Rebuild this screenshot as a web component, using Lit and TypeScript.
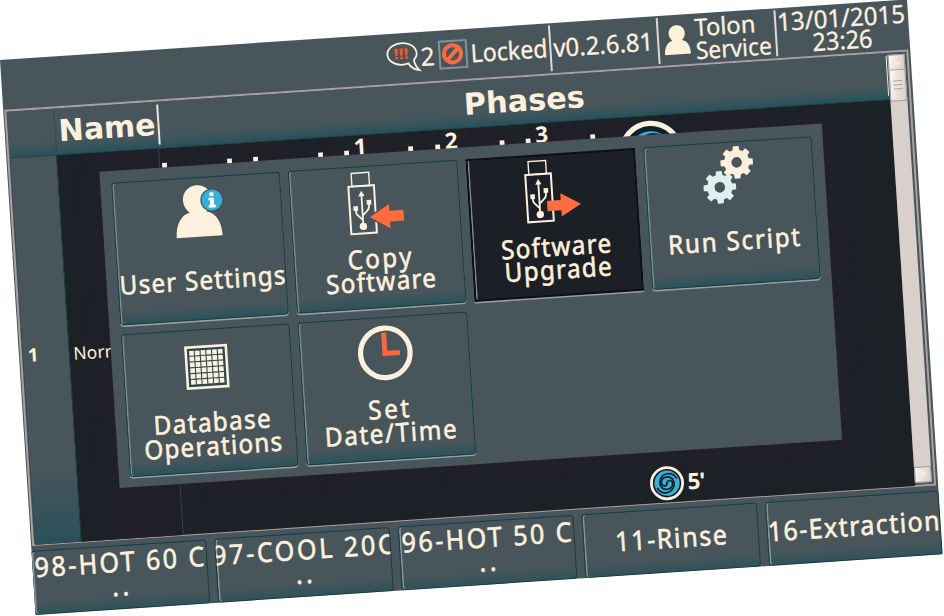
import { LitElement, html, svg, css } from "lit";
import { customElement } from "lit/decorators.js";
import { classMap } from "lit/directives/class-map.js";

interface Line { text: string; w: number; }
interface Action { id: string; lines: Line[]; top: number; selected?: boolean; }
interface Program { lines: Line[]; }

const ACTIONS: Action[] = [
  { id: "user", lines: [{ text: "User Settings", w: 166 }], top: 93.5 },
  { id: "copy", lines: [{ text: "Copy", w: 64 }, { text: "Software", w: 110 }], top: 83 },
  { id: "upgrade", lines: [{ text: "Software", w: 110 }, { text: "Upgrade", w: 107 }], top: 82, selected: true },
  { id: "script", lines: [{ text: "Run Script", w: 132 }], top: 89.5 },
  { id: "database", lines: [{ text: "Database", w: 117 }, { text: "Operations", w: 138 }], top: 83.5 },
  { id: "clock", lines: [{ text: "Set", w: 41 }, { text: "Date/Time", w: 132 }], top: 82.5 },
];

const PROGRAMS: Program[] = [
  { lines: [{ text: "98-HOT 60 C", w: 170 }, { text: "..", w: 17 }] },
  { lines: [{ text: "97-COOL 20C", w: 182 }, { text: "..", w: 17 }] },
  { lines: [{ text: "96-HOT 50 C", w: 170 }, { text: "..", w: 17 }] },
  { lines: [{ text: "11-Rinse", w: 112 }] },
  { lines: [{ text: "16-Extraction", w: 172 }] },
];

/* One line of text fitted to a known width; squeeze narrows the glyphs themselves. */
const fitted = (text: string, w: number, h: number, base: number, glyphs = false, squeeze = 1) => html`
  <svg class="line" width=${w} height=${h}>
    <text transform="scale(${squeeze} 1)" x="0" y=${base} textLength=${w / squeeze}
      lengthAdjust=${glyphs ? "spacingAndGlyphs" : "spacing"}>${text}</text>
  </svg>`;

const gear = (cx: number, cy: number, fill: string) => svg`
  <g transform="translate(${cx} ${cy})" fill=${fill}>
    ${[0, 45, 90, 135, 180, 225, 270, 315].map(
      (a) => svg`<path d="M-2.9 -16.2H2.9L3.6 -10H-3.6Z" transform="rotate(${a})"/>`)}
    <circle r="9" fill="none" stroke=${fill} stroke-width="7.4"/>
  </g>`;

const usb = (x: number) => svg`
  <g transform="translate(${x} 0)">
    <rect x="4.6" y="5.6" width="17.6" height="13" fill="none" stroke="#fdf0dc" stroke-width="1.4"/>
    <rect x="1" y="18.8" width="25.6" height="47.4" fill="none" stroke="#fdf0dc" stroke-width="2"/>
    <g stroke="#fdf0dc" fill="none" stroke-width="1.8">
      <path d="M13.5 28V58M13.5 53L8.2 47.4Q7 46 7 42.5M13.5 48.5L18.8 43.4Q20.6 41.6 20.6 37"/>
    </g>
    <g fill="#fdf0dc">
      <path d="M13.5 23.5L16.7 29H10.3Z"/><rect x="4.7" y="38.6" width="4.6" height="4.6"/>
      <rect x="18.3" y="33.2" width="4.6" height="4.6"/><circle cx="13.5" cy="59.2" r="3.7"/>
    </g>
  </g>`;

const person = svg`
  <path fill="#fdf0dc" d="M23 0C31.4 0 37.4 6.4 37.4 14.4C37.4 20 34.4 24.3 31.4 27C40.6 28.6 46 38.6 46 51.6H0C0 38.6 5.4 28.6 14.6 27C11.6 24.3 8.6 20 8.6 14.4C8.6 6.4 14.6 0 23 0Z"/>`;

const swirl = (r: number, blue: number) => svg`
  <g transform="scale(${r / 17})">
    <circle r="15.6" fill="#12202b" stroke="#fdf0dc" stroke-width="2.8"/>
    <circle r=${blue} fill="#38b0d8"/>
    <g fill="none" stroke="#10242f" stroke-width="1.7" stroke-linecap="round">
      ${[0, 180].map((a) => svg`
        <path transform="rotate(${a})" d="M0 0C0.4 -3.6 5.8 -3.4 5.6 1C5.2 7 -3.6 8 -6.4 2.6C-8.6 -2.4 -5.4 -8.6 0.6 -9.4C4.6 -9.8 8 -7.8 9.8 -4.6"/>`)}
    </g>
  </g>`;

function icon(id: string) {
  switch (id) {
    case "user":
      return svg`<g transform="translate(62 7)">${person}</g>
        <circle cx="99.5" cy="22.8" r="11.6" fill="#48565c"/>
        <circle cx="99.5" cy="22.8" r="10.4" fill="#35b0d6"/>
        <path fill="#fff" d="M97.5 15.2h4v3.6h-4zM96.1 20.4h5.4v7.4h1.8v2.4h-7.4v-2.4h1.6v-5h-1.4z"/>`;
    case "copy":
      return svg`${usb(57.5)}
        <path d="M78.2 50.6L98 38.6V45.4H112V56H98V62.8Z" fill="#ff6c40" stroke="#48565c" stroke-width="3" paint-order="stroke"/>`;
    case "upgrade":
      return svg`<g transform="translate(-.8 -1)">${usb(57.6)}
        <path d="M112.4 51L92.4 39.2V46H78.6V56.4H92.4V62.6Z" fill="#ff6c40"/></g>`;
    case "script":
      return svg`${gear(92.6, 20.2, "#fdf0dc")}${gear(74.2, 44, "#dcf1f0")}`;
    case "database":
      return svg`
        <rect x="63.6" y="16.4" width="40.4" height="41" fill="#2c474d" stroke="#fdf0dc" stroke-width="2.6"/>
        ${[0, 1, 2, 3, 4, 5].map((r) => [0, 1, 2, 3, 4, 5].map((c) => svg`
          <rect x=${67 + c * 5.75} y=${20 + r * 5.8} width="4.7" height="4.7" fill="#fdf0dc"/>`))}`;
    default:
      return svg`
        <circle cx="84.8" cy="34.8" r="24.8" fill="none" stroke="#fdf0dc" stroke-width="5.2"/>
        <path d="M84.4 14.6V35.4H99.4" fill="none" stroke="#f9693f" stroke-width="5"/>`;
  }
}

@customElement("app-root")
export class AppRoot extends LitElement {
  static styles = css`
    :host { display: block; width: 944px; height: 616px; overflow: hidden; background: #fff; }
    * { box-sizing: border-box; }
    svg { display: block; flex: none; overflow: visible; }
    text { fill: #fdf0dc; }
    .screen {
      width: 908.5px; height: 556px; display: flex; flex-direction: column; overflow: hidden;
      background: #48565c; color: #fdf0dc; font-family: "Noto Sans", sans-serif;
      transform-origin: 0 0; transform: matrix(.9978, -.0666, .064, .998, 0, 60);
    }
    .status { height: 49.5px; flex: none; display: flex; justify-content: flex-end; align-items: center; font-size: 25px; }
    .status text { stroke: #fdf0dc; stroke-width: .3px; }
    .cell { height: 46px; display: flex; align-items: center; border-left: 2.4px solid #ded9d6; }
    .cell.first { border: 0; width: 163px; }
    .cell.version { width: 108px; padding-left: 2px; }
    .cell.who { width: 118px; padding-left: 5px; gap: 5px; font-size: 24px; }
    .cell.when { width: 133.5px; flex-direction: column; align-items: center; justify-content: center; }
    .cell.when { padding-right: 2px; }
    .name { display: flex; flex-direction: column; }
    .flag { width: 29px; height: 29px; border: 2.5px solid #7f939b; margin: 0 3px 0 4px; }

    .panel { height: 437px; flex: none; display: flex; border: 2px solid #aaa09f; margin: 0 1.4px 0 1px; position: relative; }
    .table { flex: 1; display: flex; flex-direction: column; min-width: 0; padding-left: 1px; }
    .head {
      height: 47px; flex: none; display: flex; align-items: center; border-bottom: 1.2px solid #184850;
      background: linear-gradient(#48565c 68%, #3e555c 82%, #24525a 100%);
      font: bold 30px "DejaVu Sans", sans-serif;
    }
    .head .num { width: 47px; height: 40px; border-right: 1px solid #34474d; }
    .head .nm { width: 103.6px; height: 40px; padding: 3px 0 0 3px; border-right: 2.2px solid #ece5dd; }
    .head .ph { flex: 1; height: 40px; padding: 3.4px 0 0 3px; display: flex; justify-content: center; border-right: 1.5px solid #ece5dd; margin-right: 1px; }
    .body { flex: 1; display: flex; background: #1c2126; }
    .body .num {
      width: 47px; border-right: 1px solid #174047; display: flex; justify-content: center; padding: 189px 26px 0 0;
      background: linear-gradient(#48565c 80%, #2a505a 100%); font: bold 18.5px "Noto Sans", sans-serif;
    }
    .body .nm {
      width: 102px; border-right: 1.4px solid #3a4247; padding: 186px 0 0 3.5px; font-size: 17.5px; white-space: nowrap;
      background: linear-gradient(90deg, #1c2126 8%, #211f29 45%, #1e2027);
    }
    .body .ph { flex: 1; overflow: hidden; font: bold 22.5px "Noto Sans", sans-serif; }
    .body .ph svg { width: 100%; height: 100%; overflow: hidden; }
    .glow { filter: blur(11px); }
    .scroll { width: 17px; flex: none; margin: 2px 2px 2px 0; display: flex; flex-direction: column; background: #d9cfcb; }
    .knob { background: linear-gradient(100deg, #faf8f6, #d5cecb); border: 1px solid #a59c9a; display: flex; align-items: center; justify-content: center; }
    .up, .down { height: 16px; }
    .thumb { height: 31px; border-top: 0; }
    .rail { flex: 1; }

    .modal {
      position: absolute; left: 88.8px; top: 66.7px; width: 724px; height: 317px; padding: 11.8px 10.6px 10.4px 10.8px;
      background: #48565c;
      display: grid; grid-template-columns: repeat(4, 1fr); grid-template-rows: repeat(2, 1fr); gap: 9px 8px;
    }
    .btn {
      display: flex; flex-direction: column; align-items: center; overflow: hidden;
      border: 1.5px solid #123d43; border-radius: 4px; font-size: 26px;
      background: linear-gradient(#48565c 91%, #2b525a 100%);
      box-shadow: inset 1.6px 0 0 #8b979b;
    }
    .btn text { stroke: #fdf0dc; stroke-width: .6px; }
    .modal .btn { box-shadow: inset 1.5px 0 0 #7f8d92, 0 1.6px 0 #96a0a4; }
    .modal .btn.on { background: #1c2026; border-color: #0b1018; border-width: 2px; border-radius: 1px; }
    .words { display: flex; flex-direction: column; align-items: center; }
    .modal .words { padding-left: 1.5px; }

    .footer { flex: 1; display: grid; grid-template-columns: repeat(4, 176px) 1fr; gap: 8px; padding: 5px 0 0; margin-left: -1.2px; }
    .footer .btn { font-size: 27px; justify-content: center; background: linear-gradient(#48565c 80%, #2f525a 100%); }
    .footer .two { padding-bottom: 4px; }
  `;

  private action(a: Action) {
    return html`
      <div class=${classMap({ btn: true, on: !!a.selected })}>
        <svg width="168" height=${a.top}>${icon(a.id)}</svg>
        <div class="words">${a.lines.map((l) => fitted(l.text, l.w, 23.5, 18.5, false, 0.93))}</div>
      </div>`;
  }

  private program(p: Program) {
    const two = p.lines.length > 1;
    return html`
      <div class="btn">
        <div class=${classMap({ words: true, two })}>
          ${p.lines.map((l) => fitted(l.text, l.w, two ? 23.5 : 20, two ? 20.5 : 17.5, false, 0.93))}
        </div>
      </div>`;
  }

  render() {
    const dots = [157, 222.1, 248.2, 313.3, 339.4, 403.6, 430.7, 495.2, 521.3, 586];
    return html`
      <div class="screen">
        <div class="status">
          <div class="cell first">
            <svg width="34" height="46">
              <path d="M21.4 28.6A14.6 10.8 0 1 1 27 25.4Q27.6 31 32 36Q24.6 34.6 21.4 28.6Z" fill="none" stroke="#fdf0dc" stroke-width="1.8"/>
              <g fill="#f9552f">
                ${[8.2, 13.2, 18.2].map((x) => svg`<path d="M${x} 13.4h3.4l-.6 7h-2.2zM${x + 0.4} 21.4h2.6v2.4h-2.6z"/>`)}
              </g>
            </svg>
            ${fitted("2", 14, 46, 32, true)}
            <div class="flag">
              <svg width="24" height="24"><g fill="none" stroke="#f96b40" stroke-width="4">
                <circle cx="12" cy="12" r="8.6"/><path d="M6.4 18L17.8 6.4"/></g></svg>
            </div>
            ${fitted("Locked", 77, 46, 31.8, true)}
          </div>
          <div class="cell version">${fitted("v0.2.6.81", 100, 46, 32, true)}</div>
          <div class="cell who">
            <svg width="26" height="30" viewBox="0 0 46 52">${person}</svg>
            <div class="name">${fitted("Tolon", 61, 23, 20.6, true)}${fitted("Service", 76, 23, 20.6, true)}</div>
          </div>
          <div class="cell when">
            ${fitted("13/01/2015", 128, 22.5, 21, true)}${fitted("23:26", 60, 22.5, 20.4, true)}
          </div>
        </div>

        <div class="panel">
          <div class="table">
            <div class="head">
              <div class="num"></div>
              <div class="nm">${fitted("Name", 97, 36, 27, true)}</div>
              <div class="ph">${fitted("Phases", 121, 36, 27.8, true)}</div>
            </div>
            <div class="body">
              <div class="num">${fitted("1", 10, 24, 15)}</div>
              <div class="nm">Norr</div>
              <div class="ph">
                <svg viewBox="152.5 98 733 387" preserveAspectRatio="none">
                  <rect class="glow" x="80" y="106" width="747" height="342" fill="#221f2a"/>
                  ${dots.map((u) => svg`<rect x=${u - 2.4} y="112.6" width="4.8" height="5" fill="#fdf0dc"/>`)}
                  <text x="347" y="117.6">1</text>
                  <text x="438" y="117.6">2</text>
                  <text x="528.7" y="117.6">3</text>
                  <g transform="translate(643 134.8)">${swirl(32, 11.4)}</g>
                  <g transform="translate(638 465.6)">${swirl(17, 12.6)}</g>
                  <text x="658.6" y="473.4" textLength="18">5'</text>
                </svg>
              </div>
            </div>
          </div>
          <div class="scroll">
            <div class="knob up"><svg width="8" height="4"><path d="M0 4L4 0L8 4Z" fill="#fdeccb"/></svg></div>
            <div class="knob thumb"><svg width="9" height="9"><path d="M0 .5H9M0 4.5H9M0 8.5H9" stroke="#aaa3a0"/></svg></div>
            <div class="rail"></div>
            <div class="knob down"><svg width="8" height="4"><path d="M0 0L4 4L8 0Z" fill="#fdeccb"/></svg></div>
          </div>
          <div class="modal">${ACTIONS.map((a) => this.action(a))}</div>
        </div>

        <div class="footer">${PROGRAMS.map((p) => this.program(p))}</div>
      </div>`;
  }
}
